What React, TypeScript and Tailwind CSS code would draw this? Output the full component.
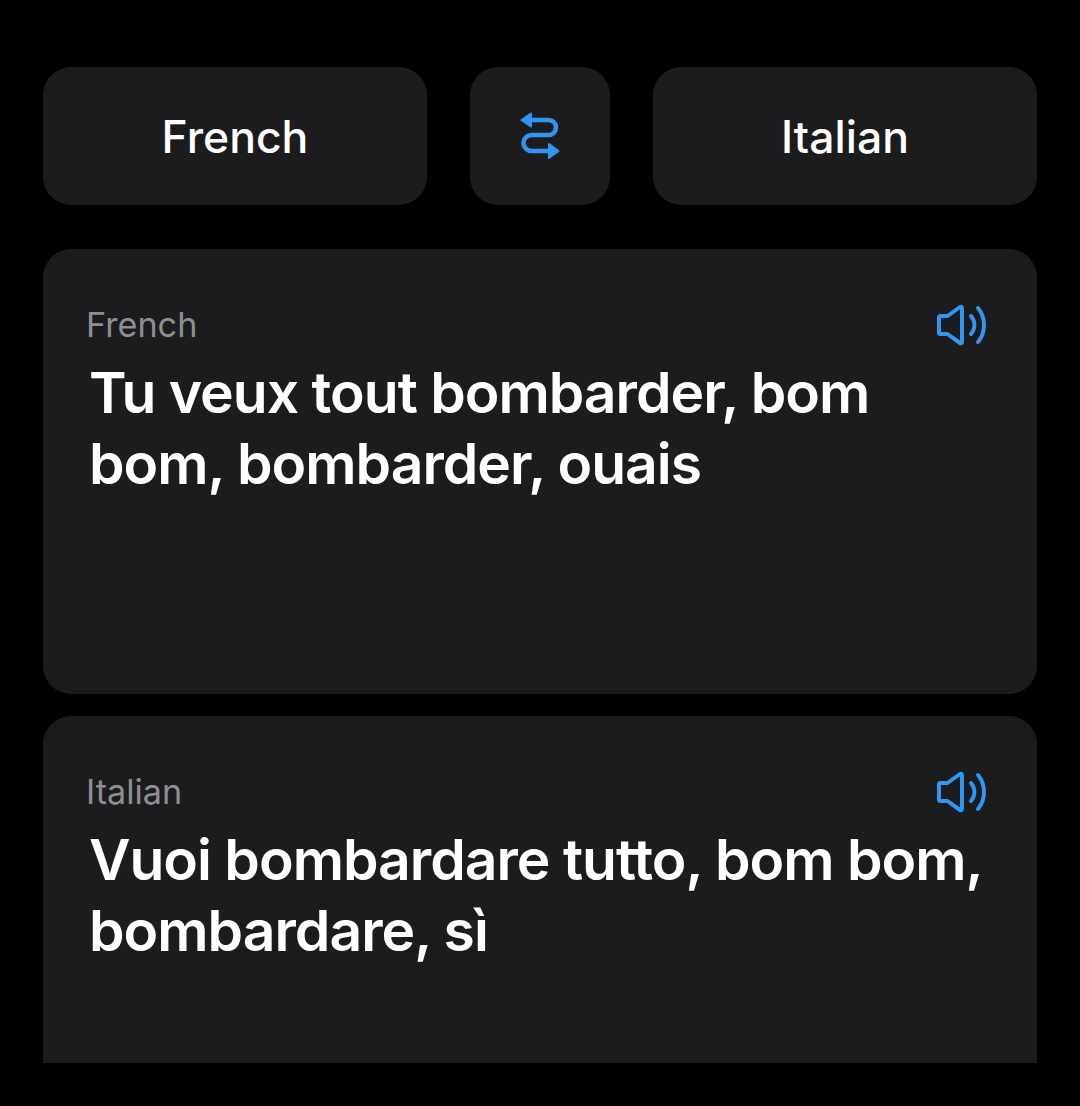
import React from 'react';

const SwapIcon = () => (
  <svg width="42" height="48" viewBox="0 0 42 48" fill="none" className="text-[#2f96f3]">
    <path d="M10 8H29.500A7.500 7.500 0 0 1 29.500 23H12.500A8 8 0 0 0 12.500 39H30" stroke="currentColor" strokeWidth="4.500" strokeLinecap="round" />
    <path d="M12 1.500V14.500L2.500 8L12 1.500Z" fill="currentColor" stroke="currentColor" strokeWidth="2" strokeLinejoin="round" />
    <path d="M30 32V46L39.500 39L30 32Z" fill="currentColor" stroke="currentColor" strokeWidth="2" strokeLinejoin="round" />
  </svg>
);

const SpeakerIcon = () => (
  <svg width="52" height="44" viewBox="0 0 52 44" fill="none" className="text-[#2f96f3]">
    <path d="M3 14.500C3 13.500 3.800 13 4.500 13H11.500L24 4C25 3.300 26 3.800 26 5V39C26 40.200 25 40.700 24 40L11.500 31H4.500C3.800 31 3 30.500 3 29.500V14.500Z" stroke="currentColor" strokeWidth="4" strokeLinejoin="round" />
    <path d="M35 13C39.500 18.500 39.500 25.500 35 31" stroke="currentColor" strokeWidth="4" strokeLinecap="round" />
    <path d="M42 5C50 14.500 50 29.500 42 39" stroke="currentColor" strokeWidth="4" strokeLinecap="round" />
  </svg>
);

const LanguageCard = ({ label, text, className }: { label: string; text: string; className: string }) => (
  <div className={`bg-[#1c1c1e] pl-[43px] pr-[49px] pt-[53px] ${className}`}>
    <div className="flex items-center justify-between h-[46px]">
      <span className="text-[34.200px] leading-[46px] text-[#8e8e93]">{label}</span>
      <SpeakerIcon />
    </div>
    <p className="mt-[9px] pl-[3px] mr-[-20px] text-[57px] leading-[71px] font-semibold tracking-[-1px] text-white">{text}</p>
  </div>
);

export default function App() {
  return (
    <div className="w-[1080px] h-[1106px] bg-black px-[43px] pt-[67px] overflow-hidden font-['Inter',sans-serif] [font-variant-ligatures:none]">
      <div className="flex gap-[43px] h-[138px]">
        <button className="flex-1 pt-[2px] rounded-[28px] bg-[#1c1c1e] text-[44.500px] font-[550] text-white">French</button>
        <button className="w-[140px] rounded-[28px] bg-[#1c1c1e] flex items-center justify-center">
          <SwapIcon />
        </button>
        <button className="flex-1 pt-[2px] rounded-[28px] bg-[#1c1c1e] text-[44.500px] font-[550] text-white">Italian</button>
      </div>
      <LanguageCard
        label="French"
        text="Tu veux tout bombarder, bom bom, bombarder, ouais"
        className="mt-[44px] h-[445px] rounded-[28px]"
      />
      <LanguageCard
        label="Italian"
        text="Vuoi bombardare tutto, bom bom, bombardare, sì"
        className="mt-[22px] h-[347px] rounded-t-[28px]"
      />
    </div>
  );
}
